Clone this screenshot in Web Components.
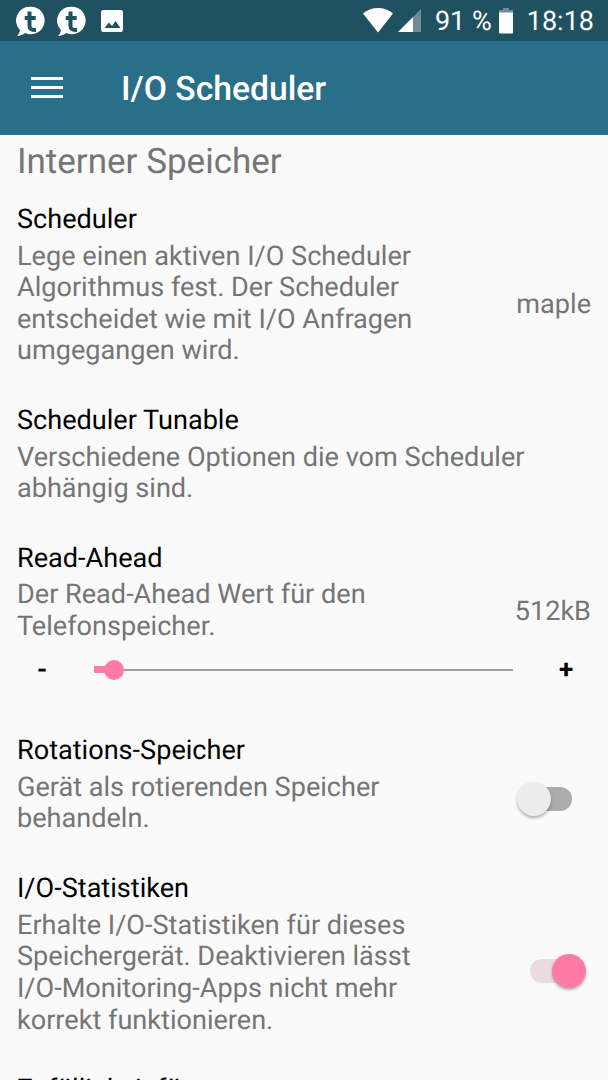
<!DOCTYPE html>
<html>
<head>
<meta charset="utf-8">
<title>I/O Scheduler</title>
<style>
html, body { margin: 0; padding: 0; }
body {
    width: 608px;
    height: 1080px;
    overflow: hidden;
    background: #fafafa;
    font-family: Roboto, "Noto Sans", sans-serif;
    text-rendering: geometricPrecision;
}
</style>
</head>
<body>
<status-bar></status-bar>
<app-bar>I/O Scheduler</app-bar>
<section-title>Interner Speicher</section-title>
<pref-row heading="Scheduler">
    Lege einen aktiven I/O Scheduler Algorithmus fest. Der Scheduler entscheidet wie mit I/O Anfragen umgegangen wird.
    <span slot="aside">maple</span>
</pref-row>
<pref-row heading="Scheduler Tunable" class="wide">Verschiedene Optionen die vom Scheduler abhängig sind.</pref-row>
<pref-row heading="Read-Ahead" class="tight">
    Der Read-Ahead Wert für den Telefonspeicher.
    <span slot="aside">512kB</span>
</pref-row>
<seek-bar></seek-bar>
<pref-row heading="Rotations-Speicher">
    Gerät als rotierenden Speicher behandeln.
    <toggle-switch slot="aside"></toggle-switch>
</pref-row>
<pref-row heading="I/O-Statistiken">
    Erhalte I/O-Statistiken für dieses Speichergerät. Deaktivieren lässt I/O-Monitoring-Apps nicht mehr korrekt funktionieren.
    <toggle-switch slot="aside" checked></toggle-switch>
</pref-row>
<pref-row heading="Zufälligkeit für"></pref-row>

<script>
customElements.define('status-bar', class extends HTMLElement {
    constructor() {
        super()
        const bubble = /*html*/`
            <svg class="ic" width="30" height="30" viewBox="0 0 30 30">
                <path fill="#fff" d="M14.8 2.2a13.8 13.8 0 1 1-5.6 26.4c-2 1.600-4.800 2.800-8.300 3 1.600-1.500 2.700-3.700 3-6.200A13.800 13.800 0 0 1 14.800 2.200z" transform="translate(0 -1.500)"/>
                <path fill="none" stroke="#1f5161" stroke-width="4" d="M13.500 5.500v14.500c0 3 1.800 4 6.500 4M8.700 12h11"/>
            </svg>`
        const shadow = this.attachShadow({ mode: "open" })
        shadow.innerHTML = /*html*/`
        <style>
        :host {
            display: flex;
            align-items: center;
            height: 41px;
            padding: 0 14px 0 16px;
            background: #1f5161;
            color: #fff;
            font-size: 27px;
            line-height: 41px;
        }
        .left { display: flex; align-items: center; gap: 11px; flex: 1; }
        .right { display: flex; align-items: center; }
        svg { display: block; }
        .ic { margin-top: 1px; }
        .pct { margin: 2px 6px 0 13px; }
        .time { margin: 2px 0 0 13px; }
        </style>
        <div class="left">
            ${bubble}
            ${bubble}
            <svg width="22" height="22" viewBox="0 0 22 22" style="margin-left:3px">
                <rect width="22" height="22" rx="2.500" fill="#fff"/>
                <path fill="#1f5161" d="M3.500 18l4.500-5.500 3 3.500 3.500-5 5 7z"/>
            </svg>
        </div>
        <div class="right">
            <svg width="30" height="25" viewBox="0 0 30 25">
                <path fill="#fff" d="M15 0c6 0 11 2 15 5.500L15 24.500 0 5.500C4 2 9 0 15 0z"/>
            </svg>
            <svg width="24" height="24" viewBox="0 0 24 24" style="margin:1px 0 0 5px">
                <path fill="#fff" d="M0 23L15 8v15z"/>
                <path fill="#fff" fill-opacity=".35" d="M15 8l8-8v23h-8z"/>
            </svg>
            <span class="pct">91 %</span>
            <svg width="16" height="26" viewBox="0 0 16 26">
                <path fill="#fff" fill-opacity=".35" d="M5 0h6v2h4v3H1V2h4z"/>
                <path fill="#fff" d="M1 4.500h14V24.500a1 1 0 0 1-1 1H2a1 1 0 0 1-1-1z"/>
            </svg>
            <span class="time">18:18</span>
        </div>`
    }
})

customElements.define('app-bar', class extends HTMLElement {
    constructor() {
        super()
        const shadow = this.attachShadow({ mode: "open" })
        shadow.innerHTML = /*html*/`
        <style>
        :host {
            display: flex;
            align-items: center;
            height: 94px;
            padding-left: 31px;
            background: #2a6f8a;
            color: #fff;
            font-size: 33.7px;
            font-weight: 500;
        }
        .menu {
            display: flex;
            flex-direction: column;
            gap: 6px;
            width: 32px;
            margin: -1px 58px 0 0;
        }
        .menu i { display: block; height: 3px; background: #fff; }
        .title { margin-top: 3px; }
        </style>
        <div class="menu"><i></i><i></i><i></i></div>
        <span class="title"><slot></slot></span>`
    }
})

customElements.define('section-title', class extends HTMLElement {
    constructor() {
        super()
        const shadow = this.attachShadow({ mode: "open" })
        shadow.innerHTML = /*html*/`
        <style>
        :host {
            display: block;
            padding: 8px 17px 17px;
            color: #757575;
            font-size: 35px;
            line-height: 38px;
        }
        </style>
        <slot></slot>`
    }
})

customElements.define('pref-row', class extends HTMLElement {
    constructor() {
        super()
        const shadow = this.attachShadow({ mode: "open" })
        shadow.innerHTML = /*html*/`
        <style>
        :host {
            display: grid;
            grid-template-columns: 1fr auto;
            padding: 0 17px 32px;
            font-size: 27.1px;
        }
        :host(.tight) { padding-bottom: 0; }
        .heading {
            grid-column: 1 / -1;
            color: #000;
            line-height: 42px;
            margin-bottom: .5px;
        }
        .desc { color: #757575; line-height: 31.65px; padding-right: 90px; }
        :host(.wide) .desc { padding-right: 0; }
        .aside { align-self: center; color: #757575; }
        </style>
        <div class="heading"></div>
        <div class="desc"><slot></slot></div>
        <div class="aside"><slot name="aside"></slot></div>`
        shadow.querySelector('.heading').textContent = this.getAttribute('heading')
    }
})

customElements.define('seek-bar', class extends HTMLElement {
    constructor() {
        super()
        const shadow = this.attachShadow({ mode: "open" })
        shadow.innerHTML = /*html*/`
        <style>
        :host {
            display: flex;
            align-items: center;
            height: 55px;
            margin-bottom: 31.500px;
            color: #000;
            font-size: 26px;
            font-weight: 700;
        }
        .end { width: 84px; text-align: center; }
        .track { position: relative; flex: 1; height: 2px; background: #9e9e9e; margin-left: 10px; margin-right: 11px; }
        .fill { position: absolute; left: 0; top: -3px; width: 20px; height: 7px; background: #ff7ba5; }
        .thumb { position: absolute; left: 10px; top: -9px; width: 20px; height: 20px; border-radius: 50%; background: #ff7ba5; }
        </style>
        <span class="end">-</span>
        <div class="track"><div class="fill"></div><div class="thumb"></div></div>
        <span class="end">+</span>`
    }
})

customElements.define('toggle-switch', class extends HTMLElement {
    constructor() {
        super()
        const shadow = this.attachShadow({ mode: "open" })
        shadow.innerHTML = /*html*/`
        <style>
        :host {
            display: block;
            position: relative;
            width: 69px;
            height: 34px;
            margin: -8px 5px 0 0;
        }
        :host([checked]) { margin-top: -4px; }
        .track { position: absolute; left: 11px; top: 5px; width: 44px; height: 24px; border-radius: 12px; background: #ababab; }
        .thumb {
            position: absolute;
            left: 0;
            top: 0;
            width: 34px;
            height: 34px;
            border-radius: 50%;
            background: #ececec;
            box-shadow: 0 2px 3px rgba(0,0,0,.3);
        }
        :host([checked]) .track { left: 13px; background: #ecdae2; }
        :host([checked]) .thumb { left: 35px; background: #ff7ba5; }
        </style>
        <div class="track"></div>
        <div class="thumb"></div>`
    }
})
</script>
</body>
</html>
